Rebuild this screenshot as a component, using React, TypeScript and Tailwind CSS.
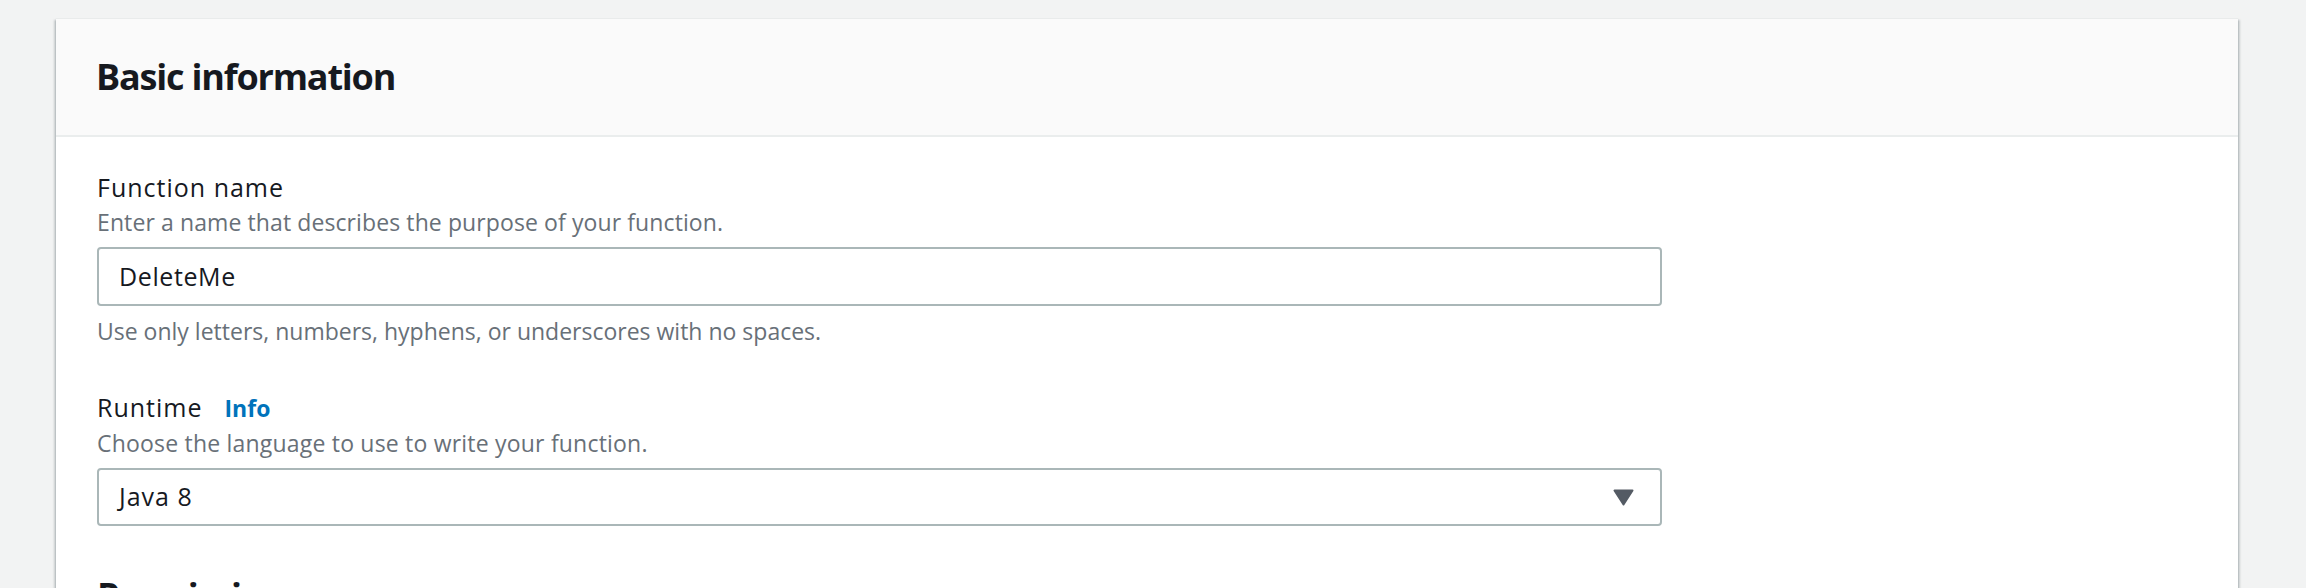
import React from "react";

export default function App() {
  return (
    <div
      className="w-[2306px] h-[588px] overflow-hidden bg-[#f2f3f3] pt-[18px] pl-[56px]"
      style={{ fontFamily: '"Open Sans", "Noto Sans", sans-serif' }}
    >
      <div className="w-[2182px] h-[600px] bg-white shadow-[0_2px_2px_0_rgba(0,28,36,0.3),2px_2px_2px_0_rgba(0,28,36,0.15),-2px_2px_2px_0_rgba(0,28,36,0.15)] border-t border-[#e9ebeb]">
        <div className="h-[118px] bg-[#fafafa] border-b-2 border-[#eaeded] pl-[40px] pt-[38px]">
          <h2 className="text-[36px] leading-[40px] font-bold text-[#16191f] tracking-[-1.2px]">
            Basic information
          </h2>
        </div>
        <div className="pl-[41px] pt-[34px]">
          <div className="flex flex-col">
            <label className="text-[25px] leading-[32px] text-[#16191f] tracking-[1px]">Function name</label>
            <div className="mt-[4px] text-[23px] leading-[30px] text-[#687078] tracking-[0.1px]">
              Enter a name that describes the purpose of your function.
            </div>
            <div className="mt-[10px] w-[1565px] h-[59px] border-2 border-[#aab7b8] rounded-[4px] flex items-center pl-[20px]">
              <span className="text-[25px] text-[#16191f] tracking-[0.6px]">DeleteMe</span>
            </div>
            <div className="mt-[10px] text-[23px] leading-[30px] text-[#687078]">
              Use only letters, numbers, hyphens, or underscores with no spaces.
            </div>
          </div>
          <div className="flex flex-col mt-[45px]">
            <div className="flex items-baseline gap-[22px]">
              <label className="text-[25px] leading-[32px] text-[#16191f] tracking-[1px]">Runtime</label>
              <span className="text-[23px] leading-[32px] font-bold text-[#0073bb]">Info</span>
            </div>
            <div className="mt-[4px] text-[23px] leading-[30px] text-[#687078] tracking-[0.2px]">
              Choose the language to use to write your function.
            </div>
            <div className="mt-[10px] w-[1565px] h-[58px] border-2 border-[#aab7b8] rounded-[4px] flex items-center justify-between pl-[20px] pr-[26px]">
              <span className="text-[25px] text-[#16191f] tracking-[1px]">Java 8</span>
              <svg width="21" height="17" viewBox="0 0 21 17">
                <path d="M1.5 1.5 L19.5 1.5 L10.5 15.5 Z" fill="#545b64" stroke="#545b64" strokeWidth="2" strokeLinejoin="round" />
              </svg>
            </div>
          </div>
          <div className="mt-[50px] text-[36px] leading-[40px] font-bold text-[#16191f] tracking-[-1.2px]">
            Permissions
          </div>
        </div>
      </div>
    </div>
  );
}
